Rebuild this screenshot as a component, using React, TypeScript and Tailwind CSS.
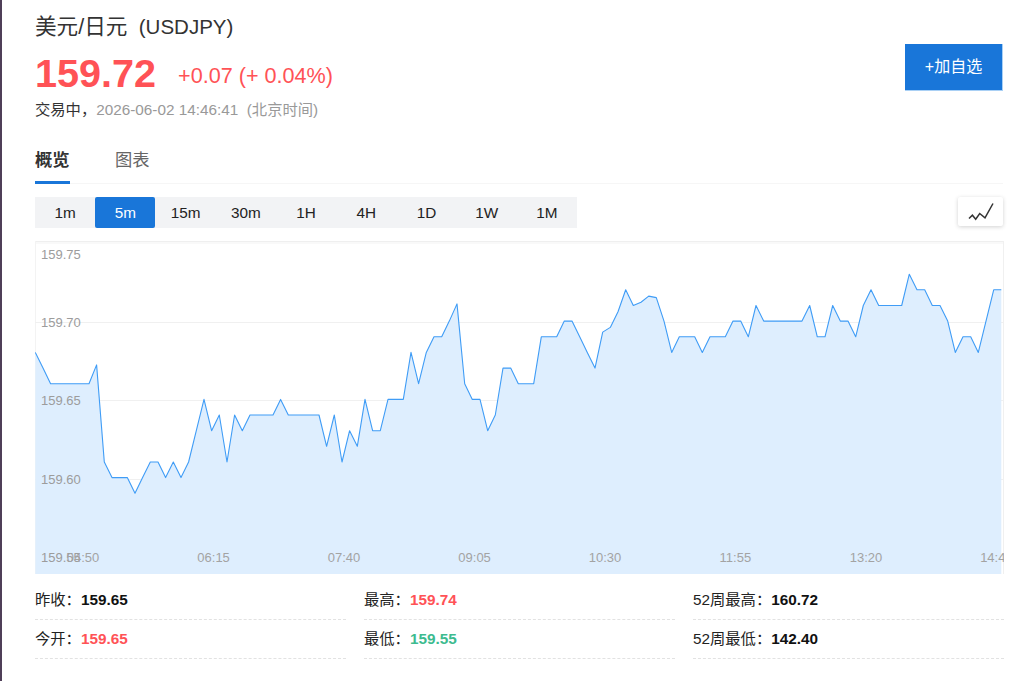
const font = "font-['Liberation_Sans','Noto_Sans_CJK_SC',sans-serif]";

const periods = ["1m", "5m", "15m", "30m", "1H", "4H", "1D", "1W", "1M"];

// price in hundredths above 159.00, one point every 5 minutes
const prices = [
  68, 67, 66, 66, 66, 66, 66, 66, 67.2, 61, 60, 60, 60, 59, 60, 61, 61, 60, 61, 60, 61, 63, 65, 63, 64, 61, 64, 63, 64,
  64, 64, 64, 65, 64, 64, 64, 64, 64, 62, 64, 61, 63, 62, 65, 63, 63, 65, 65, 65, 68, 66, 68, 69, 69, 70, 71.1, 66, 65,
  65, 63, 64, 67, 67, 66, 66, 66, 69, 69, 69, 70, 70, 69, 68, 67, 69.3, 69.6, 70.6, 72, 71, 71.2, 71.6, 71.5, 70, 68,
  69, 69, 69, 68, 69, 69, 69, 70, 70, 69, 71, 70, 70, 70, 70, 70, 70, 71, 69, 69, 71, 70, 70, 69, 71, 72, 71, 71, 71,
  71, 73, 72, 72, 71, 71, 70, 68, 69, 69, 68, 70, 72, 72,
];

const px = (i: number) => 35.3 + i * 7.667;
const py = (v: number) => 321.1 + (70 - v) * 15.65;
const line = prices.map((v, i) => `${px(i).toFixed(1)},${py(v).toFixed(1)}`).join(" ");
const area = `35.3,574 ${line} ${px(prices.length - 1).toFixed(1)},574`;

const yLabels = [
  { text: "159.75", y: 259 },
  { text: "159.70", y: 327 },
  { text: "159.65", y: 405 },
  { text: "159.60", y: 484 },
  { text: "159.55", y: 562 },
];
const xLabels = [
  { text: "04:50", x: 83 },
  { text: "06:15", x: 213.6 },
  { text: "07:40", x: 344 },
  { text: "09:05", x: 474.6 },
  { text: "10:30", x: 605 },
  { text: "11:55", x: 735.4 },
  { text: "13:20", x: 866 },
  { text: "14:45", x: 996.4 },
];

const stats = [
  { label: "昨收：", value: "159.65", color: "text-[#111]" },
  { label: "最高：", value: "159.74", color: "text-[#ff5256]" },
  { label: "52周最高：", value: "160.72", color: "text-[#111]" },
  { label: "今开：", value: "159.65", color: "text-[#ff5256]" },
  { label: "最低：", value: "159.55", color: "text-[#3dbb8f]" },
  { label: "52周最低：", value: "142.40", color: "text-[#111]" },
];

function Chart() {
  return (
    <svg viewBox="35 241 969 333" className="block h-[333px] w-[969px]">
      <line x1="35" x2="1004" y1="241.5" y2="241.5" stroke="#efefef" />
      <line x1="35" x2="1004" y1="243" y2="243" stroke="#f3f3f3" />
      <line x1="35.5" x2="35.5" y1="241" y2="574" stroke="#f3f3f3" />
      <line x1="1003.5" x2="1003.5" y1="241" y2="574" stroke="#f0f0f0" />
      <line x1="35" x2="1004" y1="322.5" y2="322.5" stroke="#f0f0f0" />
      <line x1="35" x2="1004" y1="400.5" y2="400.5" stroke="#f0f0f0" />
      <line x1="35" x2="1004" y1="479.5" y2="479.5" stroke="#f0f0f0" />
      <polygon points={area} fill="#deeefe" />
      <polyline points={line} fill="none" stroke="#3f9cf6" strokeWidth="1.1" strokeLinejoin="round" />
      {yLabels.map((l) => (
        <text key={l.text} x="41" y={l.y} fontSize="13" fill="#9c9c9c" fontFamily="'Liberation Sans', sans-serif">
          {l.text}
        </text>
      ))}
      {xLabels.map((l) => (
        <text
          key={l.text}
          x={l.x}
          y="562"
          fontSize="13"
          fill="#a3a3a3"
          textAnchor="middle"
          fontFamily="'Liberation Sans', sans-serif"
        >
          {l.text}
        </text>
      ))}
    </svg>
  );
}

export default function App() {
  return (
    <div className={`${font} h-[681px] w-[1024px] overflow-hidden border-l-2 border-[#4f3f58] bg-white pl-[33px] pr-[21px]`}>
      <div className="flex items-start justify-between">
        <div>
          <h1 className="mt-[14px] h-[26px] text-[21.6px] leading-[26px] whitespace-pre text-[#333]">
            美元/日元<span className="text-[20.5px]">  (USDJPY)</span>
          </h1>
          <div className="mt-[10px] flex h-[46px] items-center">
            <span className="text-[39.6px] leading-[46px] font-bold text-[#ff5256]">159.72</span>
            <span className="mt-[6px] ml-[22px] text-[21.6px] leading-[26px] text-[#ff5256]">+0.07 (+ 0.04%)</span>
          </div>
          <div className="mt-1 h-5 text-[15.3px] leading-5 whitespace-pre text-[#333]">
            交易中，<span className="text-[#999]">2026-06-02 14:46:41  (北京时间)</span>
          </div>
        </div>
        <button className="mt-11 h-[47px] w-[98px] border-r border-b border-[#a9d0f5] bg-[#1976d9] text-base text-white">
          +加自选
        </button>
      </div>

      <div className="mt-[28px] flex h-[36px] gap-[45px] border-b border-[#f6f6f6] text-[17.3px] leading-[24px]">
        <div className="h-[36px] w-[35px] border-b-[3px] border-[#1976d9] font-bold whitespace-nowrap text-[#333]">概览</div>
        <div className="text-[#666]">图表</div>
      </div>

      <div className="mt-[13px] flex items-start justify-between">
        <div className="flex h-[31px] w-[542px] bg-[#f2f3f5]">
          {periods.map((p) => (
            <div
              key={p}
              className={
                p === "5m"
                  ? "flex-1 rounded-[2px] bg-[#1976d9] text-center text-[15.3px] leading-[31px] text-white"
                  : "flex-1 text-center text-[15.3px] leading-[31px] text-[#222]"
              }
            >
              {p}
            </div>
          ))}
        </div>
        <div className="flex h-[29px] w-[45px] items-center justify-center rounded-[2px] bg-white shadow-[0_1px_4px_rgba(0,0,0,0.18)]">
          <svg width="26" height="18" viewBox="0 0 26 18" fill="none" stroke="#333" strokeWidth="1.5">
            <polyline points="1,15.5 4.4,12.2 7.7,16.2 11.7,10.5 17,14.9 25,0.5" />
          </svg>
        </div>
      </div>

      <div className="mt-[13px]">
        <Chart />
      </div>

      <div className="mt-[7px] grid w-[969px] grid-cols-3 gap-x-[18px]">
        {stats.map((s) => (
          <div key={s.label} className="h-[39px] border-b border-dashed border-[#e2e2e2] text-[15.3px] leading-[38px] text-[#222]">
            {s.label}
            <span className={`font-bold ${s.color}`}>{s.value}</span>
          </div>
        ))}
      </div>
    </div>
  );
}
